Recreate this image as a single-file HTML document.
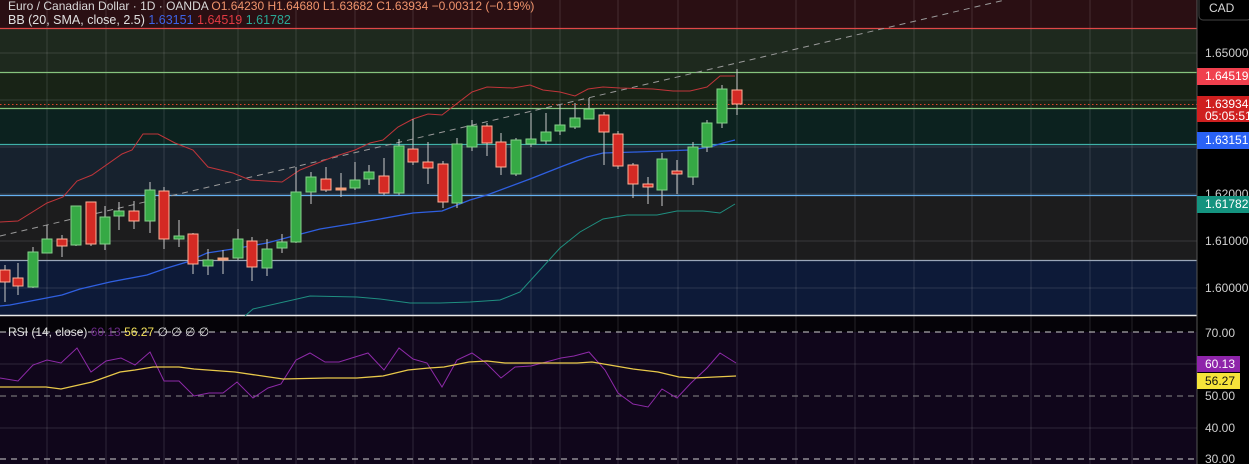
<!DOCTYPE html>
<html><head><meta charset="utf-8"><style>
html,body{margin:0;padding:0;background:#000;width:1249px;height:464px;overflow:hidden}
svg{display:block}
text{font-family:"Liberation Sans",sans-serif}
.w{stroke:#c9c9c9;stroke-width:1}
.g{fill:#36a945;stroke:#86d08a;stroke-width:1}
.r{fill:#d42a24;stroke:#ffb199;stroke-width:1}
.o{fill:#f4a07a;stroke:#f4a07a}
.grid{stroke:rgba(255,255,255,0.13);stroke-width:1}
</style></head><body>
<svg width="1249" height="464" xmlns="http://www.w3.org/2000/svg">
<rect x="0" y="0" width="1197" height="28" fill="#2a0f13"/>
<rect x="0" y="28" width="1197" height="44" fill="#1e291e"/>
<rect x="0" y="72" width="1197" height="36" fill="#182316"/>
<rect x="0" y="108" width="1197" height="36" fill="#0c221f"/>
<rect x="0" y="144" width="1197" height="51" fill="#17222e"/>
<rect x="0" y="195" width="1197" height="65" fill="#1c1c1d"/>
<rect x="0" y="260" width="1197" height="56" fill="#0d1a38"/>
<rect x="0" y="316" width="1197" height="16" fill="#050308"/>
<rect x="0" y="332" width="1197" height="132" fill="#10061b"/>
<g class="grid">
<line x1="0" x2="1197" y1="53" y2="53"/><line x1="0" x2="1197" y1="100" y2="100"/><line x1="0" x2="1197" y1="147" y2="147"/><line x1="0" x2="1197" y1="194" y2="194"/><line x1="0" x2="1197" y1="241" y2="241"/><line x1="0" x2="1197" y1="288" y2="288"/>
<line x1="0" x2="1197" y1="364" y2="364"/><line x1="0" x2="1197" y1="428" y2="428"/>
<line x1="47" x2="47" y1="0" y2="464"/><line x1="106" x2="106" y1="0" y2="464"/><line x1="164" x2="164" y1="0" y2="464"/><line x1="238" x2="238" y1="0" y2="464"/><line x1="296" x2="296" y1="0" y2="464"/><line x1="355" x2="355" y1="0" y2="464"/><line x1="413" x2="413" y1="0" y2="464"/><line x1="472" x2="472" y1="0" y2="464"/><line x1="531" x2="531" y1="0" y2="464"/><line x1="560" x2="560" y1="0" y2="464"/><line x1="618" x2="618" y1="0" y2="464"/><line x1="678" x2="678" y1="0" y2="464"/><line x1="737" x2="737" y1="0" y2="464"/><line x1="796" x2="796" y1="0" y2="464"/><line x1="855" x2="855" y1="0" y2="464"/><line x1="914" x2="914" y1="0" y2="464"/><line x1="972" x2="972" y1="0" y2="464"/><line x1="1031" x2="1031" y1="0" y2="464"/><line x1="1090" x2="1090" y1="0" y2="464"/><line x1="1132" x2="1132" y1="0" y2="464"/>
</g>
<line x1="0" x2="1197" y1="28.5" y2="28.5" stroke="#e04848" stroke-width="1.2"/>
<line x1="0" x2="1197" y1="72.5" y2="72.5" stroke="#86c47e" stroke-width="1.2"/>
<line x1="0" x2="1197" y1="104.5" y2="104.5" stroke="#e0452e" stroke-width="1" stroke-dasharray="1.5,2.5"/>
<line x1="0" x2="1197" y1="108.5" y2="108.5" stroke="#86c47e" stroke-width="1.2"/>
<line x1="0" x2="1197" y1="144.5" y2="144.5" stroke="#3fb0a8" stroke-width="1.2"/>
<line x1="0" x2="1197" y1="195.5" y2="195.5" stroke="#64b0f0" stroke-width="1.2"/>
<line x1="0" x2="1197" y1="260.5" y2="260.5" stroke="#9aa6b8" stroke-width="1.2"/>
<line x1="0" x2="1197" y1="315.5" y2="315.5" stroke="#e8e8e8" stroke-width="1.5"/>
<line x1="1197" x2="1197" y1="0" y2="464" stroke="#555" stroke-width="1"/>
<line x1="0" y1="236" x2="1005" y2="0" stroke="#9a9a9a" stroke-width="1" stroke-dasharray="6,5"/>
<polyline fill="none" stroke="#c0353a" stroke-width="1" points="0,222 18,221 47,203 63,197 77,181 92,175 122,154 132,150 143,134 158,134 175,143 193,150 208,167 233,173 250,180 282,182 300,170 333,157 355,150 370,143 383,140 398,127 413,119 428,114 442,115 472,92 487,87 513,88 530,85 543,90 560,92 575,96 588,89 603,87 620,88 653,89 673,91 690,91 707,87 720,76 735,76"/>
<polyline fill="none" stroke="#2f5fe0" stroke-width="1.3" points="0,306 10,305 62,295 80,289 110,282 147,275 167,268 187,262 207,253 233,249 267,243 297,235 320,229 357,223 380,219 413,213 442,211 470,200 487,195 530,179 563,166 587,157 603,153 637,152 690,150 710,147 723,143 735,140"/>
<polyline fill="none" stroke="#1f8f80" stroke-width="1" points="245,316 253,309 297,299 310,296 357,297 380,299 410,303 440,303 470,302 500,300 520,292 540,270 560,248 580,232 603,219 627,215 657,215 677,211 703,211 720,213 735,204"/>
<g>
<line class="w" x1="5" x2="5" y1="265" y2="302"/><rect class="r" x="0" y="270" width="10" height="12"/>
<line class="w" x1="18" x2="18" y1="263" y2="295"/><rect class="r" x="13" y="278" width="10" height="8"/>
<line class="w" x1="33" x2="33" y1="247" y2="288"/><rect class="g" x="28" y="252" width="10" height="35"/>
<line class="w" x1="47" x2="47" y1="225" y2="253"/><rect class="g" x="42" y="239" width="10" height="14"/>
<line class="w" x1="62" x2="62" y1="235" y2="257"/><rect class="r" x="57" y="239" width="10" height="7"/>
<line class="w" x1="76" x2="76" y1="206" y2="246"/><rect class="g" x="71" y="206" width="10" height="39"/>
<line class="w" x1="91" x2="91" y1="202" y2="246"/><rect class="r" x="86" y="202" width="10" height="42"/>
<line class="w" x1="105" x2="105" y1="206" y2="250"/><rect class="g" x="100" y="217" width="10" height="27"/>
<line class="w" x1="119" x2="119" y1="202" y2="230"/><rect class="g" x="114" y="211" width="10" height="5"/>
<line class="w" x1="134" x2="134" y1="201" y2="229"/><rect class="r" x="129" y="211" width="10" height="10"/>
<line class="w" x1="150" x2="150" y1="182" y2="233"/><rect class="g" x="145" y="190" width="10" height="31"/>
<line class="w" x1="164" x2="164" y1="187" y2="249"/><rect class="r" x="159" y="191" width="10" height="48"/>
<line class="w" x1="179" x2="179" y1="220" y2="247"/><rect class="g" x="174" y="236" width="10" height="3"/>
<line class="w" x1="193" x2="193" y1="233" y2="274"/><rect class="r" x="188" y="234" width="10" height="30"/>
<line class="w" x1="208" x2="208" y1="249" y2="275"/><rect class="g" x="203" y="260" width="10" height="6"/>
<line class="w" x1="223" x2="223" y1="250" y2="274"/><rect class="o" x="218" y="258" width="10" height="2"/>
<line class="w" x1="238" x2="238" y1="229" y2="260"/><rect class="g" x="233" y="239" width="10" height="19"/>
<line class="w" x1="252" x2="252" y1="237" y2="281"/><rect class="r" x="247" y="241" width="10" height="26"/>
<line class="w" x1="267" x2="267" y1="239" y2="276"/><rect class="g" x="262" y="249" width="10" height="19"/>
<line class="w" x1="282" x2="282" y1="234" y2="253"/><rect class="g" x="277" y="242" width="10" height="6"/>
<line class="w" x1="296" x2="296" y1="167" y2="243"/><rect class="g" x="291" y="192" width="10" height="50"/>
<line class="w" x1="311" x2="311" y1="172" y2="204"/><rect class="g" x="306" y="177" width="10" height="15"/>
<line class="w" x1="326" x2="326" y1="167" y2="192"/><rect class="r" x="321" y="179" width="10" height="11"/>
<line class="w" x1="341" x2="341" y1="173" y2="197"/><rect class="o" x="336" y="188" width="10" height="2"/>
<line class="w" x1="355" x2="355" y1="162" y2="190"/><rect class="g" x="350" y="180" width="10" height="8"/>
<line class="w" x1="369" x2="369" y1="165" y2="185"/><rect class="g" x="364" y="172" width="10" height="7"/>
<line class="w" x1="384" x2="384" y1="158" y2="195"/><rect class="r" x="379" y="176" width="10" height="17"/>
<line class="w" x1="399" x2="399" y1="139" y2="195"/><rect class="g" x="394" y="146" width="10" height="47"/>
<line class="w" x1="413" x2="413" y1="119" y2="165"/><rect class="r" x="408" y="149" width="10" height="13"/>
<line class="w" x1="428" x2="428" y1="142" y2="184"/><rect class="r" x="423" y="162" width="10" height="6"/>
<line class="w" x1="443" x2="443" y1="161" y2="208"/><rect class="r" x="438" y="164" width="10" height="38"/>
<line class="w" x1="457" x2="457" y1="138" y2="208"/><rect class="g" x="452" y="144" width="10" height="59"/>
<line class="w" x1="472" x2="472" y1="120" y2="151"/><rect class="g" x="467" y="126" width="10" height="21"/>
<line class="w" x1="487" x2="487" y1="123" y2="156"/><rect class="r" x="482" y="126" width="10" height="17"/>
<line class="w" x1="501" x2="501" y1="133" y2="175"/><rect class="r" x="496" y="142" width="10" height="25"/>
<line class="w" x1="516" x2="516" y1="138" y2="176"/><rect class="g" x="511" y="140" width="10" height="34"/>
<line class="w" x1="531" x2="531" y1="113" y2="147"/><rect class="g" x="526" y="139" width="10" height="5"/>
<line class="w" x1="546" x2="546" y1="113" y2="144"/><rect class="g" x="541" y="132" width="10" height="9"/>
<line class="w" x1="560" x2="560" y1="105" y2="135"/><rect class="g" x="555" y="125" width="10" height="6"/>
<line class="w" x1="575" x2="575" y1="103" y2="129"/><rect class="g" x="570" y="118" width="10" height="9"/>
<line class="w" x1="589" x2="589" y1="98" y2="119"/><rect class="g" x="584" y="109" width="10" height="10"/>
<line class="w" x1="604" x2="604" y1="112" y2="165"/><rect class="r" x="599" y="115" width="10" height="17"/>
<line class="w" x1="618" x2="618" y1="131" y2="169"/><rect class="r" x="613" y="134" width="10" height="32"/>
<line class="w" x1="633" x2="633" y1="163" y2="198"/><rect class="r" x="628" y="165" width="10" height="19"/>
<line class="w" x1="648" x2="648" y1="177" y2="204"/><rect class="r" x="643" y="184" width="10" height="3"/>
<line class="w" x1="662" x2="662" y1="153" y2="206"/><rect class="g" x="657" y="159" width="10" height="31"/>
<line class="w" x1="677" x2="677" y1="160" y2="194"/><rect class="r" x="672" y="171" width="10" height="3"/>
<line class="w" x1="693" x2="693" y1="142" y2="185"/><rect class="g" x="688" y="147" width="10" height="30"/>
<line class="w" x1="707" x2="707" y1="120" y2="152"/><rect class="g" x="702" y="123" width="10" height="24"/>
<line class="w" x1="722" x2="722" y1="85" y2="128"/><rect class="g" x="717" y="89" width="10" height="34"/>
<line class="w" x1="737" x2="737" y1="69" y2="115"/><rect class="r" x="732" y="90" width="10" height="14"/>
</g>
<line x1="0" x2="1197" y1="332" y2="332" stroke="#cfcfcf" stroke-dasharray="6,5"/>
<line x1="0" x2="1197" y1="396" y2="396" stroke="#8a8a8a" stroke-dasharray="6,5"/>
<line x1="0" x2="1197" y1="459" y2="459" stroke="#cfcfcf" stroke-dasharray="6,5"/>
<polyline fill="none" stroke="#8e2aa8" stroke-width="1" points="0,378 18,381 33,365 47,360 61,363 77,348 91,372 106,361 121,358 135,365 150,352 164,381 179,381 194,396 209,393 223,393 237,382 253,398 268,388 281,384 296,360 310,353 325,362 339,362 355,357 368,353 384,370 399,348 413,359 427,363 442,387 457,360 472,353 486,363 501,378 515,367 531,366 546,362 561,358 574,356 589,352 605,370 618,393 633,404 648,407 662,389 677,398 691,383 707,368 720,353 736,363"/>
<polyline fill="none" stroke="#e8c84a" stroke-width="1.3" points="0,387 46,387 61,389 92,382 120,372 135,370 153,367 179,367 194,369 235,372 283,379 327,378 357,378 383,376 408,370 429,368 444,367 469,362 487,361 505,363 536,363 577,363 592,362 633,369 658,372 679,377 694,378 736,376"/>
<text x="8" y="10" font-size="12" fill="#d8d8d8">Euro / Canadian Dollar · 1D · OANDA <tspan fill="#f0946c">O1.64230 H1.64680 L1.63682 C1.63934 −0.00312 (−0.19%)</tspan></text>
<text x="8" y="24" font-size="12.5" fill="#e0e0e0">BB (20, SMA, close, 2.5) <tspan fill="#3d63e6">1.63151</tspan> <tspan fill="#e23a42">1.64519</tspan> <tspan fill="#2aa896">1.61782</tspan></text>
<text x="8" y="336" font-size="12" fill="#e0e0e0">RSI (14, close) <tspan fill="#6a2a86">60.13</tspan> <tspan fill="#f2e05a">56.27</tspan> ∅ ∅ ∅ ∅</text>
<rect x="1199" y="-4" width="52" height="24" rx="4" fill="#000" stroke="#444"/>
<text x="1209" y="12" font-size="12" fill="#d8d8d8">CAD</text>
<g font-size="12" fill="#d0d0d0">
<text x="1205" y="57">1.65000</text>
<text x="1205" y="198">1.62000</text>
<text x="1205" y="245">1.61000</text>
<text x="1205" y="292">1.60000</text>
<text x="1205" y="337">70.00</text>
<text x="1205" y="400">50.00</text>
<text x="1205" y="432">40.00</text>
<text x="1205" y="463">30.00</text>
</g>
<rect x="1197" y="68" width="52" height="17" fill="#f0404e"/>
<text x="1205" y="80" font-size="12" fill="#fff">1.64519</text>
<rect x="1197" y="96" width="52" height="26" fill="#cf1f1f"/>
<text x="1205" y="108" font-size="12" fill="#fff">1.63934</text>
<text x="1205" y="120" font-size="12" fill="#fff">05:05:51</text>
<rect x="1197" y="132" width="52" height="17" fill="#2a62f5"/>
<text x="1205" y="144" font-size="12" fill="#fff">1.63151</text>
<rect x="1197" y="196" width="52" height="17" fill="#14937f"/>
<text x="1205" y="208" font-size="12" fill="#fff">1.61782</text>
<rect x="1197" y="356" width="43" height="16" fill="#8e24aa"/>
<text x="1205" y="368" font-size="12" fill="#fff">60.13</text>
<rect x="1197" y="373" width="43" height="16" fill="#f5e33a"/>
<text x="1205" y="385" font-size="12" fill="#111">56.27</text>
</svg>
</body></html>
